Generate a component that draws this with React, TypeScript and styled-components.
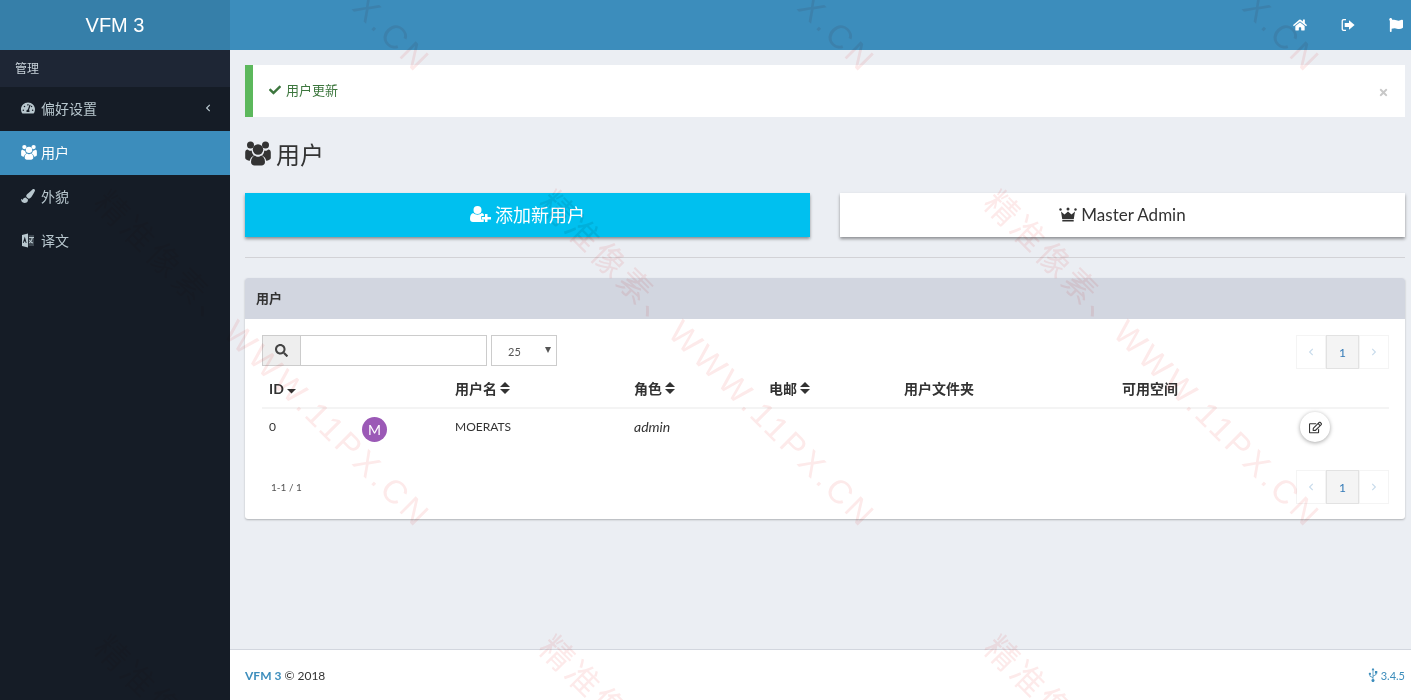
import styled, { createGlobalStyle } from "styled-components";
import {
  FaCheck,
  FaFlag,
  FaHome,
  FaPaintBrush,
  FaRegEdit,
  FaSearch,
  FaTachometerAlt,
  FaTimes,
  FaUsb,
  FaChevronLeft,
  FaChevronRight,
} from "react-icons/fa";

const BASE_FONT = `Lato, "Noto Sans CJK SC", sans-serif`;

const Global = createGlobalStyle`
  html, body { margin: 0; padding: 0; height: 100%; }
  body {
    font-family: ${BASE_FONT};
    font-size: 13px;
    color: #333;
    background: #ebeef3;
    overflow: hidden;
  }
  * { box-sizing: border-box; }
`;

const WATERMARKS = [
  [100, 180], [545, 180], [990, 180],
  [-345, -275], [100, -275], [545, -275], [990, -275],
  [-340, 625], [100, 625], [545, 625], [990, 625],
  [-340, 180],
];

function UsersIcon({ size }: { size: number }) {
  return (
    <svg width={size} height={size} viewBox="0 0 26 25" fill="currentColor">
      <circle cx="5.500" cy="4.500" r="3.500" />
      <circle cx="20.500" cy="4.500" r="3.500" />
      <circle cx="13" cy="9" r="5.200" />
      <path d="M.2 17.500V12c0-2 1-3 2.500-3 .8.900 1.800 1.300 2.800 1.300.6 0 1-.1 1.300-.3-.1 2 .9 3.800 2.200 5-2.300 1-3.700 2.700-4.200 5.200C2.500 20 .2 19 .2 17.500z" />
      <path d="M25.800 17.500V12c0-2-1-3-2.500-3-.8.900-1.800 1.300-2.800 1.300-.6 0-1-.1-1.300-.3.100 2-.9 3.800-2.200 5 2.300 1 3.700 2.700 4.200 5.200 2.300-.200 4.600-1.200 4.600-2.700z" />
      <path d="M6 21.500c0-3.500 1.800-6 3.800-6.500 1 .9 2 1.200 3.200 1.200s2.200-.3 3.200-1.200c2 .5 3.800 3 3.800 6.500 0 2.200-1.500 3.500-3.500 3.500h-7C7.500 25 6 23.700 6 21.500z" />
    </svg>
  );
}

function UserPlusIcon() {
  return (
    <svg width="21" height="16" viewBox="0 0 21 16" fill="currentColor">
      <circle cx="7.500" cy="4" r="4" />
      <path d="M0 13c0-3 1-5.500 3.200-6 1.100 1.100 2.700 1.700 4.300 1.700S10.700 8.100 11.800 7c.8.200 1.500.6 2 1.300V10h-2.500v3.500h2.500v2.300c-.4.100-.8.200-1.300.2H3c-1.800 0-3-1.200-3-3z" />
      <path d="M15 8h2.500v3H21v2.500h-3.500V16H15v-2.500h-3V11h3z" />
    </svg>
  );
}

function SignOutIcon() {
  return (
    <svg width="14" height="14" viewBox="0 0 14 14" fill="currentColor">
      <path d="M5 1H2.600C1.400 1 .6 1.900.6 3v8c0 1.100.8 2 2 2H5v-1.300H2.800c-.5 0-.9-.4-.9-.9V3.200c0-.5.4-.9.9-.9H5z" />
      <path d="M8 2.300 13.600 7 8 11.700V9H3.700V5H8z" />
    </svg>
  );
}

function CrownIcon() {
  return (
    <svg width="18" height="15" viewBox="0 0 18 15" fill="currentColor">
      <circle cx="9" cy="2" r="1.500" />
      <circle cx="1.500" cy="2.500" r="1.200" />
      <circle cx="16.500" cy="2.500" r="1.200" />
      <path d="M2 4.500 5.500 7.500 9 4.500 12.500 7.500 16 4.500 14.800 12H3.200z" />
      <path d="M3.300 12.800h11.400V14.500H3.300z" />
    </svg>
  );
}

function LanguageIcon() {
  return (
    <svg width="14" height="15" viewBox="0 0 14 15" fill="currentColor">
      <path d="M1 2 7 .5v14L1 13z" />
      <path d="M7.500 2H13v11H7.500z" fillOpacity=".25" />
      <path d="M3.800 3.500 5.600 10H4.700l-.4-1.500H3L2.700 10h-.9z" fill="#151c26" />
      <path d="M8 4h5v1h-1.300c-.2 1.500-.7 2.700-1.500 3.600.5.400 1.100.8 1.900 1l-.5.9c-.9-.3-1.600-.7-2.200-1.200-.5.500-1 .9-1.400 1.100V9.300c.3-.2.600-.4.900-.7-.4-.6-.7-1.200-.9-1.800h1c.1.400.3.800.6 1.100.5-.7.800-1.500 1-2.900H8z" />
    </svg>
  );
}

function SortIcon() {
  return (
    <svg width="10" height="12" viewBox="0 0 10 12" fill="currentColor">
      <path d="M5 0 10 5H0z" />
      <path d="M0 7H10L5 12z" />
    </svg>
  );
}

function SortDownIcon() {
  return (
    <svg width="9" height="11" viewBox="0 0 9 11" fill="currentColor">
      <path d="M0 6H9L4.500 10.500z" />
    </svg>
  );
}

function Pager() {
  return (
    <Pagination>
      <PageArrow><FaChevronLeft size={8} /></PageArrow>
      <PageNumber>1</PageNumber>
      <PageArrow><FaChevronRight size={8} /></PageArrow>
    </Pagination>
  );
}

function SortHead({ label }: { label: string }) {
  return (
    <HeadCell>
      {label} <SortIcon />
    </HeadCell>
  );
}

export default function App() {
  return (
    <>
      <Global />
      <Page>
        <Sidebar>
          <Logo>VFM 3</Logo>
          <MenuHeader>管理</MenuHeader>
          <MenuItem>
            <MenuIcon><FaTachometerAlt size={14} /></MenuIcon>
            偏好设置
            <MenuCaret><FaChevronLeft size={8} /></MenuCaret>
          </MenuItem>
          <MenuItem $active>
            <MenuIcon><UsersIcon size={16} /></MenuIcon>
            用户
          </MenuItem>
          <MenuItem>
            <MenuIcon><FaPaintBrush size={14} /></MenuIcon>
            外貌
          </MenuItem>
          <MenuItem>
            <MenuIcon><LanguageIcon /></MenuIcon>
            译文
          </MenuItem>
        </Sidebar>
        <Main>
          <TopBar>
            <TopIcon><FaHome size={14} /></TopIcon>
            <TopIcon><SignOutIcon /></TopIcon>
            <TopIcon><FaFlag size={14} /></TopIcon>
          </TopBar>
          <Content>
            <Alert>
              <FaCheck size={12} />
              <span>用户更新</span>
              <AlertClose><FaTimes size={11} /></AlertClose>
            </Alert>
            <Title>
              <UsersIcon size={26} />
              <span>用户</span>
            </Title>
            <ButtonRow>
              <BigButton $primary>
                <UserPlusIcon /> 添加新用户
              </BigButton>
              <BigButton>
                <CrownIcon /> Master Admin
              </BigButton>
            </ButtonRow>
            <Rule />
            <Box>
              <BoxHeader>用户</BoxHeader>
              <BoxBody>
                <Controls>
                  <SearchAddon><FaSearch size={13} /></SearchAddon>
                  <SearchInput />
                  <LimitSelect>
                    <span>25</span>
                    <LimitArrow />
                  </LimitSelect>
                  <PagerSlot><Pager /></PagerSlot>
                </Controls>
                <TableHead>
                  <HeadCell>
                    ID <SortDownIcon />
                  </HeadCell>
                  <HeadCell />
                  <SortHead label="用户名" />
                  <SortHead label="角色" />
                  <SortHead label="电邮" />
                  <HeadCell>用户文件夹</HeadCell>
                  <HeadCell>可用空间</HeadCell>
                  <HeadCell />
                </TableHead>
                <TableRow>
                  <Cell>0</Cell>
                  <Cell><Avatar>M</Avatar></Cell>
                  <Cell>MOERATS</Cell>
                  <Cell><Role>admin</Role></Cell>
                  <Cell />
                  <Cell />
                  <Cell />
                  <Cell><EditButton><FaRegEdit size={13} /></EditButton></Cell>
                </TableRow>
                <BoxFooter>
                  <Count>1-1 / 1</Count>
                  <Pager />
                </BoxFooter>
              </BoxBody>
            </Box>
          </Content>
          <Footer>
            <FooterText><strong>VFM 3</strong> © 2018</FooterText>
            <Version><UsbIcon size={14} /> 3.4.5</Version>
          </Footer>
        </Main>
        {WATERMARKS.map(([x, y]) => (
          <Watermark key={`${x}-${y}`} style={{ left: x, top: y }}>
            精准像素、WWW.11PX.CN
          </Watermark>
        ))}
      </Page>
    </>
  );
}

const Page = styled.div`
  position: relative;
  display: grid;
  grid-template-columns: 230px 1fr;
  height: 700px;
  overflow: hidden;
`;

const Watermark = styled.div`
  position: absolute;
  transform: rotate(45deg);
  transform-origin: 0 50%;
  font-family: "Liberation Sans", "Noto Sans CJK SC", sans-serif;
  font-size: 33px;
  letter-spacing: 3.7px;
  line-height: 1;
  white-space: nowrap;
  color: #fdeaea;
  mix-blend-mode: multiply;
  pointer-events: none;
`;

const Sidebar = styled.aside`
  background: #151c26;
  color: #b8c7ce;
`;

const Logo = styled.div`
  height: 50px;
  background: #367fa9;
  color: #fff;
  font-family: "Liberation Sans", sans-serif;
  font-size: 20px;
  line-height: 50px;
  text-align: center;
`;

const MenuHeader = styled.div`
  height: 37px;
  padding: 0 15px;
  background: #1e2635;
  color: #c8d2da;
  font-size: 12px;
  line-height: 37px;
`;

const MenuItem = styled.div<{ $active?: boolean }>`
  display: flex;
  align-items: center;
  height: 44px;
  padding: 0 16px 2px 21px;
  font-size: 14px;
  background: ${(p) => (p.$active ? "#3c8dbc" : "transparent")};
  color: ${(p) => (p.$active ? "#fff" : "#b8c7ce")};
`;

const MenuIcon = styled.span`
  display: flex;
  justify-content: flex-start;
  width: 20px;
`;

const MenuCaret = styled.span`
  display: flex;
  margin-left: auto;
  padding-right: 2px;
`;

const Main = styled.main`
  display: flex;
  flex-direction: column;
  min-width: 0;
`;

const TopBar = styled.header`
  display: flex;
  justify-content: flex-end;
  align-items: center;
  height: 50px;
  background: #3c8dbc;
  color: #fff;
  gap: 34px;
  padding-right: 8px;
`;

const TopIcon = styled.span`
  display: flex;
  width: 14px;
`;

const Content = styled.section`
  flex: 1;
  padding: 15px 6px 0 15px;
  background: #ebeef3;
`;

const Alert = styled.div`
  position: relative;
  display: flex;
  align-items: center;
  gap: 5px;
  height: 52px;
  padding: 0 0 3px 16px;
  background: #fff;
  border-left: 8px solid #5cb85c;
  color: #3c763d;
  font-size: 13px;
`;

const AlertClose = styled.span`
  display: flex;
  position: absolute;
  right: 16px;
  top: 22px;
  color: #c8c8c8;
`;

const Title = styled.h1`
  display: flex;
  align-items: center;
  gap: 5px;
  height: 76px;
  margin: 0;
  padding-bottom: 4px;
  font-size: 24px;
  font-weight: 400;
  color: #333;
`;

const ButtonRow = styled.div`
  display: grid;
  grid-template-columns: 1fr 1fr;
  gap: 30px;
`;

const BigButton = styled.div<{ $primary?: boolean }>`
  display: flex;
  justify-content: center;
  align-items: center;
  gap: 4px;
  height: 44px;
  padding-bottom: 2px;
  font-size: ${(p) => (p.$primary ? "18px" : "17px")};
  background: ${(p) => (p.$primary ? "#00c0ef" : "#fff")};
  color: ${(p) => (p.$primary ? "#fff" : "#333")};
  box-shadow: 0 2px 3px rgba(0, 0, 0, 0.4);
`;

const Rule = styled.hr`
  height: 1px;
  margin: 20px 0 20px;
  border: 0;
  background: #d2d2d6;
`;

const Box = styled.div`
  height: 241px;
  border-radius: 3px;
  background: #fff;
  box-shadow: 0 1px 2px rgba(0, 0, 0, 0.25);
  overflow: hidden;
`;

const BoxHeader = styled.div`
  height: 41px;
  padding: 0 11px;
  background: #d2d6e0;
  font-size: 13px;
  font-weight: 700;
  line-height: 41px;
  color: #333;
`;

const BoxBody = styled.div`
  padding: 16px 16px 0 17px;
`;

const Controls = styled.div`
  display: flex;
  align-items: flex-start;
  height: 36px;
`;

const SearchAddon = styled.div`
  display: flex;
  justify-content: center;
  align-items: center;
  width: 39px;
  height: 31px;
  background: #eee;
  border: 1px solid #ccc;
  color: #444;
`;

const SearchInput = styled.div`
  width: 186px;
  height: 31px;
  border: 1px solid #ccc;
  border-left: 0;
`;

const LimitSelect = styled.div`
  position: relative;
  width: 66px;
  height: 31px;
  margin-left: 4px;
  padding-left: 16px;
  border: 1px solid #ccc;
  font-size: 11px;
  line-height: 31px;
  color: #555;
`;

const LimitArrow = styled.span`
  position: absolute;
  top: 11px;
  right: 5px;
  border-style: solid;
  border-width: 6px 3.5px 0;
  border-color: #555 transparent transparent;
`;

const PagerSlot = styled.div`
  margin-left: auto;
`;

const Pagination = styled.div`
  display: flex;
  height: 34px;
  color: #337ab7;
  font-size: 12px;
`;

const PageArrow = styled.div`
  display: flex;
  justify-content: center;
  align-items: center;
  width: 30px;
  border: 1px solid #f4f4f4;
  color: #c9dcec;
`;

const PageNumber = styled.div`
  display: flex;
  justify-content: center;
  align-items: center;
  width: 33px;
  background: #f4f4f4;
  border: 1px solid #e2e2e2;
`;

const COLUMNS = "93px 93px 179px 135px 135px 218px 178px 96px";

const TableHead = styled.div`
  display: grid;
  grid-template-columns: ${COLUMNS};
  height: 38px;
  border-bottom: 2px solid #f4f4f4;
`;

const HeadCell = styled.div`
  display: flex;
  align-items: center;
  gap: 3px;
  padding: 0 0 2px 7px;
  font-size: 14px;
  font-weight: 700;
  color: #333;
`;

const TableRow = styled.div`
  display: grid;
  grid-template-columns: ${COLUMNS};
  height: 60px;
`;

const Cell = styled.div`
  padding: 9px 7px 0;
  font-size: 12px;
  line-height: 18px;
  color: #333;
`;

const Role = styled.em`
  font-size: 14px;
`;

const Avatar = styled.div`
  width: 25px;
  height: 25px;
  margin-top: -1px;
  border-radius: 50%;
  background: #9b59b6;
  color: #fff;
  font-size: 14px;
  line-height: 25px;
  text-align: center;
`;

const EditButton = styled.div`
  display: flex;
  justify-content: center;
  align-items: center;
  width: 30px;
  height: 30px;
  margin-top: -6px;
  border-radius: 50%;
  background: #fff;
  box-shadow: 0 1px 4px rgba(0, 0, 0, 0.35);
`;

const BoxFooter = styled.div`
  display: flex;
  justify-content: space-between;
  align-items: center;
  height: 34px;
  margin-top: 1px;
`;

const Count = styled.span`
  padding-left: 9px;
  font-size: 10px;
  color: #555;
`;

const Footer = styled.footer`
  display: flex;
  justify-content: space-between;
  align-items: center;
  height: 51px;
  padding: 0 6px 0 15px;
  background: #fff;
  border-top: 1px solid #d2d6de;
  font-size: 12px;
`;

const FooterText = styled.span`
  color: #333;
  strong { color: #3c8dbc; }
`;

const Version = styled.span`
  display: flex;
  align-items: center;
  gap: 1px;
  font-size: 11px;
  color: #3c8dbc;
`;

const UsbIcon = styled(FaUsb)`
  transform: rotate(-90deg);
`;
